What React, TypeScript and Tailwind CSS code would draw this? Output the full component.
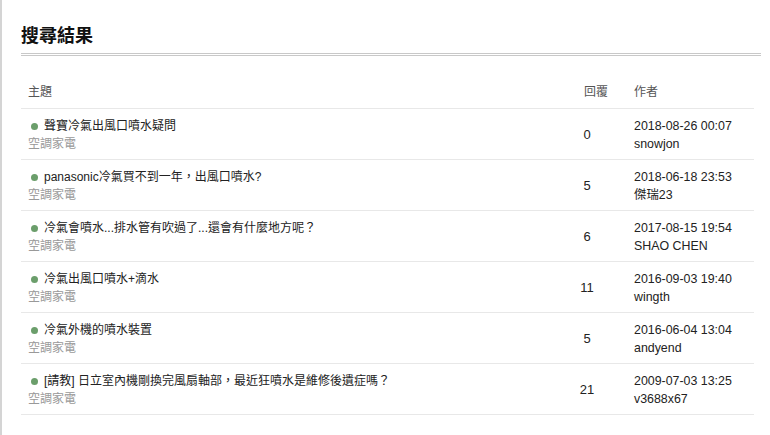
import React from "react";

const rows = [
  { title: "聲寶冷氣出風口噴水疑問", replies: "0", date: "2018-08-26 00:07", author: "snowjon" },
  { title: "panasonic冷氣買不到一年，出風口噴水?", replies: "5", date: "2018-06-18 23:53", author: "傑瑞23" },
  { title: "冷氣會噴水...排水管有吹過了...還會有什麼地方呢？", replies: "6", date: "2017-08-15 19:54", author: "SHAO CHEN" },
  { title: "冷氣出風口噴水+滴水", replies: "11", date: "2016-09-03 19:40", author: "wingth" },
  { title: "冷氣外機的噴水裝置", replies: "5", date: "2016-06-04 13:04", author: "andyend" },
  { title: "[請教] 日立室內機剛換完風扇軸部，最近狂噴水是維修後遺症嗎？", replies: "21", date: "2009-07-03 13:25", author: "v3688x67" },
];

export default function App() {
  return (
    <div
      className="w-[770px] h-[435px] bg-white border-l-2 border-[#d4d4d4] overflow-hidden"
      style={{ fontFamily: '"Liberation Sans", Arial, "Noto Sans CJK TC", sans-serif' }}
    >
      <div className="pl-[19px] pr-[9px] pt-[24px]">
        <div className="text-[18px] leading-[24px] font-bold text-[#111] pb-[5px] border-b-[3px] border-double border-[#c8c8c8]">
          搜尋結果
        </div>
      </div>
      <div className="pl-[19px] pr-[16px] pt-[27px]">
        <div className="flex text-[12px] leading-[18px] text-[#555] pb-[7px]">
          <div className="w-[555px] pl-[7px]">主題</div>
          <div className="w-[51px] pl-[8px]">回覆</div>
          <div className="flex-1 pl-[7px]">作者</div>
        </div>
        {rows.map((r, i) => (
          <div key={i} className="flex border-t border-[#e8e8e8] pt-[8px] pb-[6px] text-[12px] leading-[18px]">
            <div className="w-[555px] pl-[7px]">
              <div className="flex items-center text-[#222]">
                <span className="inline-block w-[7px] h-[7px] rounded-full bg-[#6b9e6b] ml-[3px] mr-[6px]" />
                <span>{r.title}</span>
              </div>
              <div className="text-[#999]">空調家電</div>
            </div>
            <div className="w-[51px] flex items-center">
              <div className="w-[22px] text-center text-[13px] text-[#222]">{r.replies}</div>
            </div>
            <div className="flex-1 pl-[7px] text-[#222] text-[12.4px]">
              <div>{r.date}</div>
              <div>{r.author}</div>
            </div>
          </div>
        ))}
        <div className="border-t border-[#e8e8e8]" />
      </div>
    </div>
  );
}
